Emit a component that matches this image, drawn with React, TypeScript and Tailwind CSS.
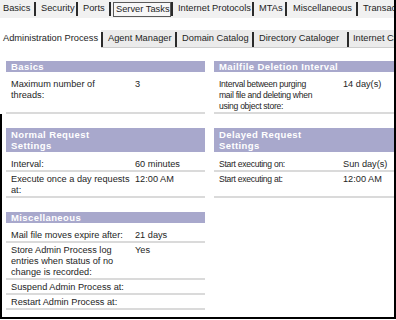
import React from "react";

type RowData = { label: string[]; value?: string };

function Sep({ tall = false }: { tall?: boolean }) {
  return <span className={tall ? "w-[2px] h-[15px] bg-[#2b2b2b] shrink-0" : "w-[2px] h-[14px] bg-[#2b2b2b] shrink-0"} />;
}

function Header({ lines }: { lines: string[] }) {
  return (
    <div
      className={
        lines.length > 1
          ? "bg-[#a8a8cc] text-white font-bold text-[9.5px] tracking-[0.4px] leading-[11px] px-[5px] py-px"
          : "bg-[#a8a8cc] text-white font-bold text-[9.5px] tracking-[0.4px] leading-[11px] px-[5px]"
      }
    >
      {lines.map((l) => (
        <div key={l} className="whitespace-nowrap">
          {l}
        </div>
      ))}
    </div>
  );
}

function Row({ row, last, narrow }: { row: RowData; last: boolean; narrow: boolean }) {
  return (
    <div
      className={
        last
          ? "flex flex-1 pt-[2px] border-b-2 border-[#dadada] leading-[11px]"
          : "flex pt-[2px] border-b-2 border-[#dadada] leading-[11px]"
      }
    >
      <div
        className={
          narrow
            ? "w-[125px] shrink-0 pl-[5px] text-[8.6px] tracking-[-0.3px]"
            : "w-[125px] shrink-0 pl-[5px]"
        }
      >
        {row.label.map((l) => (
          <div key={l} className="whitespace-nowrap">
            {l}
          </div>
        ))}
      </div>
      <div className="pl-[4px] whitespace-nowrap">{row.value}</div>
    </div>
  );
}

function Section({ title, rows, narrow = false }: { title: string[]; rows: RowData[]; narrow?: boolean }) {
  return (
    <div className="flex flex-col">
      <Header lines={title} />
      <div className="mt-[5px] flex flex-col flex-1">
        {rows.map((r, i) => (
          <Row key={r.label[0]} row={r} last={i === rows.length - 1} narrow={narrow} />
        ))}
      </div>
    </div>
  );
}

export default function App() {
  return (
    <div className="w-[396px] h-[320px] bg-white overflow-hidden font-['Liberation_Sans',Arial,sans-serif] text-[#1e1e1e]">
      <div className="h-[319px] border-r-2 border-b-2 border-black overflow-hidden flex flex-col">
        {/* top tabs */}
        <div className="h-[18px] shrink-0 bg-[#f1f1f1] flex items-center pl-[3px] text-[9.3px] whitespace-nowrap">
          <span className="w-[31px] shrink-0">Basics</span>
          <Sep />
          <span className="w-[40px] shrink-0 pl-[5px]">Security</span>
          <Sep />
          <span className="w-[31px] shrink-0 pl-[5px]">Ports</span>
          <Sep />
          <span className="ml-[2px] w-[58px] h-[15px] shrink-0 border border-[#5a5a5a] bg-[#f7f7f7] pl-[2px] leading-[13px]">
            Server Tasks
          </span>
          <Sep />
          <span className="w-[79px] shrink-0 pl-[5px]">Internet Protocols</span>
          <Sep />
          <span className="w-[31px] shrink-0 pl-[5px]">MTAs</span>
          <Sep />
          <span className="w-[69px] shrink-0 pl-[6px]">Miscellaneous</span>
          <Sep />
          <span className="shrink-0 pl-[5px]">Transactions</span>
        </div>

        {/* sub tabs */}
        <div className="mt-[12px] h-[18px] shrink-0 bg-[#ebebeb] shadow-[inset_0_-1px_0_#cdcdcd] flex items-center text-[9.3px] whitespace-nowrap">
          <span className="w-[101px] h-full shrink-0 bg-white pl-[3px] flex items-center">Administration Process</span>
          <Sep tall />
          <span className="w-[72px] shrink-0 pl-[5px]">Agent Manager</span>
          <Sep tall />
          <span className="w-[75px] shrink-0 pl-[5px]">Domain Catalog</span>
          <Sep tall />
          <span className="w-[93px] shrink-0 pl-[5px]">Directory Cataloger</span>
          <Sep tall />
          <span className="shrink-0 pl-[4px]">Internet Cluster</span>
        </div>

        <div className="pt-[13px] pl-[6px] text-[9.2px] shrink-0">
          <div className="grid grid-cols-[199px_199px] gap-x-[9px]">
            <Section title={["Basics"]} rows={[{ label: ["Maximum number of", "threads:"], value: "3" }]} />
            <Section
              narrow
              title={["Mailfile Deletion Interval"]}
              rows={[
                {
                  label: ["Interval between purging", "mail file and deleting when", "using object store:"],
                  value: "14 day(s)",
                },
              ]}
            />
          </div>
        </div>

        <div className="flex-1 border-l-2 border-black pl-[4px] pt-[14px] text-[9.2px]">
          <div className="grid grid-cols-[199px_199px] gap-x-[9px]">
            <Section
              title={["Normal Request", "Settings"]}
              rows={[
                { label: ["Interval:"], value: "60 minutes" },
                { label: ["Execute once a day requests", "at:"], value: "12:00 AM" },
              ]}
            />
            <Section
              narrow
              title={["Delayed Request", "Settings"]}
              rows={[
                { label: ["Start executing on:"], value: "Sun day(s)" },
                { label: ["Start executing at:"], value: "12:00 AM" },
              ]}
            />
          </div>
          <div className="mt-[14px] grid grid-cols-[199px_199px] gap-x-[9px]">
            <Section
              title={["Miscellaneous"]}
              rows={[
                { label: ["Mail file moves expire after:"], value: "21 days" },
                {
                  label: ["Store Admin Process log", "entries when status of no", "change is recorded:"],
                  value: "Yes",
                },
                { label: ["Suspend Admin Process at:"] },
                { label: ["Restart Admin Process at:"] },
              ]}
            />
            <div />
          </div>
        </div>
      </div>
    </div>
  );
}
